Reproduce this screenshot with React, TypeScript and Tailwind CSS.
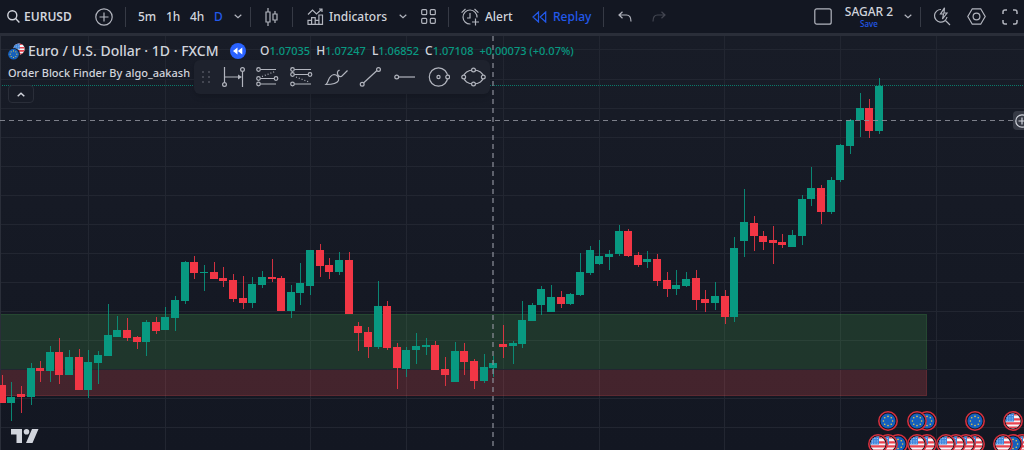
import type { ReactNode } from 'react';

type Candle = [dir: 'u' | 'd', high: number, top: number, bottom: number, low: number];

const CANDLE_START = 1.6;
const CANDLE_STEP = 9.64;
const UP = '#089981';
const DOWN = '#f23645';

const candles: Candle[] = [
  ['d', 375, 385, 403, 403], ['u', 382, 397, 403, 421], ['d', 386, 394, 397, 413], ['u', 363, 368, 397, 405],
  ['d', 361, 368, 371, 382], ['u', 346, 352, 371, 382], ['d', 338, 352, 375, 384], ['u', 350, 357, 375, 375],
  ['d', 349, 357, 390, 390], ['u', 350, 362, 390, 398], ['u', 351, 355, 363, 384], ['u', 304, 335, 356, 356],
  ['u', 316, 330, 337, 337], ['d', 318, 330, 338, 341], ['d', 336, 337, 342, 349], ['u', 320, 322, 342, 356],
  ['d', 317, 322, 331, 334], ['u', 307, 317, 330, 330], ['u', 296, 300, 318, 331], ['u', 261, 262, 301, 304],
  ['d', 256, 262, 273, 279], ['u', 265, 272, 273, 291], ['d', 262, 272, 279, 279], ['d', 267, 278, 281, 287],
  ['d', 274, 280, 299, 302], ['d', 276, 298, 303, 309], ['u', 277, 284, 303, 308], ['u', 271, 277, 285, 288],
  ['d', 259, 277, 279, 282], ['d', 276, 278, 311, 311], ['u', 285, 292, 311, 318], ['u', 263, 283, 293, 305],
  ['u', 250, 250, 286, 295], ['d', 244, 250, 266, 277], ['d', 258, 265, 272, 279], ['u', 252, 260, 272, 275],
  ['d', 252, 260, 314, 314], ['d', 322, 326, 333, 351], ['d', 327, 332, 347, 358], ['u', 281, 306, 347, 349],
  ['d', 301, 306, 348, 350], ['d', 343, 347, 368, 389], ['u', 347, 350, 369, 377], ['u', 333, 346, 350, 364],
  ['u', 338, 345, 347, 355], ['d', 341, 345, 370, 370], ['d', 357, 369, 375, 386], ['u', 342, 351, 382, 382],
  ['d', 343, 351, 362, 375], ['d', 359, 361, 381, 389], ['u', 354, 367, 381, 383], ['u', 356, 363, 368, 377],
  ['d', 325, 344, 347, 358], ['u', 341, 343, 346, 364], ['u', 301, 320, 344, 348], ['u', 303, 305, 321, 321],
  ['u', 286, 289, 305, 315], ['u', 285, 297, 312, 312], ['d', 291, 297, 304, 308], ['u', 293, 294, 304, 305],
  ['u', 253, 272, 295, 296], ['u', 246, 250, 273, 275], ['u', 240, 256, 264, 265], ['u', 250, 254, 257, 270],
  ['u', 225, 231, 254, 256], ['d', 229, 231, 256, 257], ['d', 252, 255, 265, 267], ['u', 251, 259, 262, 268],
  ['d', 254, 259, 281, 286], ['d', 272, 280, 289, 297], ['u', 270, 285, 289, 295], ['u', 272, 279, 286, 287],
  ['d', 270, 278, 300, 310], ['d', 290, 299, 303, 312], ['u', 282, 296, 303, 310], ['d', 290, 296, 317, 324],
  ['u', 237, 248, 317, 322], ['u', 189, 222, 241, 257], ['d', 216, 223, 236, 251], ['d', 231, 236, 242, 250],
  ['d', 226, 240, 243, 264], ['d', 234, 242, 245, 248], ['u', 230, 235, 247, 247], ['u', 195, 199, 236, 245],
  ['u', 167, 188, 199, 206], ['d', 185, 188, 212, 224], ['u', 177, 180, 212, 214], ['u', 144, 145, 180, 182],
  ['u', 119, 120, 146, 154], ['u', 93, 108, 120, 137], ['d', 99, 108, 131, 138], ['u', 78, 86, 131, 134],
];

const gridX = [88, 165, 310, 406, 503, 599, 724, 840, 936];
const gridY = [49, 79, 108, 137, 166, 195, 224, 253, 282, 311, 340, 369, 398, 427];

const events: { flag: 'us' | 'eu'; x: number; y: number }[] = [
  { flag: 'eu', x: 888, y: 421 },
  { flag: 'eu', x: 917, y: 421 },
  { flag: 'eu', x: 927, y: 421 },
  { flag: 'eu', x: 975, y: 421 },
  { flag: 'us', x: 1013, y: 421 },
  { flag: 'us', x: 878, y: 444 },
  { flag: 'us', x: 888, y: 444 },
  { flag: 'eu', x: 898, y: 444 },
  { flag: 'us', x: 917, y: 444 },
  { flag: 'us', x: 927, y: 444 },
  { flag: 'us', x: 946, y: 444 },
  { flag: 'us', x: 956, y: 444 },
  { flag: 'us', x: 966, y: 444 },
  { flag: 'us', x: 975, y: 444 },
  { flag: 'us', x: 1003, y: 444 },
  { flag: 'eu', x: 1013, y: 444 },
  { flag: 'us', x: 1022, y: 444 },
];

function Icon({ w, h, children }: { w: number; h: number; children: ReactNode }) {
  return (
    <svg
      width={w}
      height={h}
      viewBox={`0 0 ${w} ${h}`}
      fill="none"
      stroke="currentColor"
      strokeWidth="1.2"
      className="shrink-0"
      aria-hidden="true"
    >
      {children}
    </svg>
  );
}

function Chevron() {
  return (
    <Icon w={8} h={5}>
      <path d="M.7.8 4 3.8 7.3.8" />
    </Icon>
  );
}

function Divider() {
  return <div className="h-5 w-px shrink-0 bg-[#363a45]" />;
}

function Flag({ flag }: { flag: 'us' | 'eu' }) {
  if (flag === 'eu') {
    return (
      <g>
        <circle r="7.5" fill="#1560bd" />
        {Array.from({ length: 8 }, (_, i) => (
          <circle
            key={i}
            cx={4.6 * Math.cos((i * Math.PI) / 4)}
            cy={4.6 * Math.sin((i * Math.PI) / 4)}
            r="0.8"
            fill="#e5c94c"
          />
        ))}
      </g>
    );
  }
  return (
    <g clipPath="url(#flagClip)">
      <rect x="-8" y="-8" width="16" height="16" fill="#f5f5f8" />
      <path d="M-8-6.5H8M-8-1.7H8M-8 2.4H8M-8 6.6H8" stroke="#e8434f" strokeWidth="2.2" />
      <rect x="-8" y="-8" width="9" height="8.5" fill="#3f86dc" />
      <path d="M-6-5.5H1M-6-3H1M-6-.8H1" stroke="#b9d6f7" strokeWidth=".9" strokeDasharray="1 1.4" />
    </g>
  );
}

function Chart() {
  return (
    <svg className="absolute inset-0 h-full w-full" role="img" aria-label="EURUSD daily candles">
      <defs>
        <linearGradient id="chartBg" x1="0" y1="0" x2="0" y2="1">
          <stop offset="0" stopColor="#181c27" />
          <stop offset="1" stopColor="#131722" />
        </linearGradient>
        <clipPath id="flagClip">
          <circle r="7.5" />
        </clipPath>
      </defs>
      <rect width="100%" height="100%" fill="url(#chartBg)" />
      <g transform="translate(0 -36)">
        <g stroke="#222631" shapeRendering="crispEdges">
          {gridX.map((x) => (
            <line key={x} x1={x + 0.5} x2={x + 0.5} y1="36" y2="1200" />
          ))}
          {gridY.map((y) => (
            <line key={y} x1="0" x2="100%" y1={y + 0.5} y2={y + 0.5} />
          ))}
        </g>
        <line x1="0" x2="100%" y1="85.5" y2="85.5" stroke={UP} strokeOpacity="0.75" strokeDasharray="1 1" />

        <rect x="0" y="314" width="927" height="55" fill="#4caf50" fillOpacity="0.2" />
        <path d="M0 314.5H926.5V369" fill="none" stroke="#4caf50" strokeOpacity="0.15" />
        <rect x="0" y="370" width="927" height="26" fill="#f05350" fillOpacity="0.22" />
        <path d="M0 395.5H926.5V370" fill="none" stroke="#f05350" strokeOpacity="0.15" />
        <rect x="0" y="36" width="1" height="100%" fill="#2a2e39" />

        {candles.map(([dir, high, top, bottom, low], i) => {
          const x = Math.round(CANDLE_START + i * CANDLE_STEP);
          return (
            <g key={i} fill={dir === 'u' ? UP : DOWN}>
              <rect x={x} y={high} width="1" height={low - high} fillOpacity="0.85" />
              <rect x={x - 4} y={top} width="8" height={bottom - top} />
            </g>
          );
        })}

        <g stroke="#8f929c" strokeOpacity="0.85" strokeDasharray="5 4">
          <line x1="493" x2="493" y1="36" y2="1200" strokeWidth="1.4" />
          <line x1="0" x2="100%" y1="120.5" y2="120.5" />
        </g>

        {[...events].reverse().map((e) => (
          <g key={`${e.x}-${e.y}`} transform={`translate(${e.x} ${e.y})`}>
            <circle r="9.2" fill="#131722" stroke="#d9303e" strokeWidth="1.5" />
            <Flag flag={e.flag} />
          </g>
        ))}
      </g>
    </svg>
  );
}

function TopBar() {
  return (
    <header className="flex h-9 shrink-0 items-center border-b-3 border-[#2a2e39] bg-[#131722] pl-[7px] pr-1.5 text-xs font-medium">
      <button className="flex w-22 items-center gap-1 font-semibold">
        <Icon w={13} h={13}>
          <circle cx="5.3" cy="5.3" r="4.5" strokeWidth="1.4" />
          <path d="m8.6 8.6 3.8 3.8" strokeWidth="1.4" />
        </Icon>
        EURUSD
      </button>
      <button aria-label="Compare symbol" className="mr-3 text-[#b2b5be]">
        <Icon w={18} h={18}>
          <circle cx="9" cy="9" r="8.2" />
          <path d="M9 4.5v9M4.5 9h9" />
        </Icon>
      </button>
      <Divider />
      <nav className="ml-3 mr-2 flex items-center">
        <button className="w-7 text-left">5m</button>
        <button className="w-6 text-left">1h</button>
        <button className="w-6 text-left">4h</button>
        <button className="w-5 text-left text-[#2259eb]">D</button>
        <button aria-label="More intervals" className="text-[#b2b5be]">
          <Chevron />
        </button>
      </nav>
      <Divider />
      <button aria-label="Chart type" className="mx-3.5 text-[#b2b5be]">
        <Icon w={13} h={18}>
          <path d="M3 0v4M3 14v4M1 4h4v10H1zM10 3v3M10 12v3M8 6h4v6H8z" />
        </Icon>
      </button>
      <Divider />
      <button className="ml-3.5 flex w-[92px] items-center gap-[5px]">
        <Icon w={17} h={17}>
          <path
            d="M1 6.5 5.5 2l4 4L15 1M12 1h3v3M1 16.4v-4h3.6v4M4.6 12.4V9.6h3.6v6.8M8.2 12.4h3.7v4M11.9 12V7h3.6v9.4M.5 16.4h15.6"
            stroke="#b2b5be"
          />
        </Icon>
        Indicators
      </button>
      <button aria-label="Favorite indicators" className="mr-3.5 text-[#b2b5be]">
        <Chevron />
      </button>
      <button aria-label="Templates" className="mr-3 text-[#b2b5be]">
        <Icon w={15} h={15}>
          <rect x=".7" y=".7" width="5" height="5" rx="1" />
          <rect x="9.3" y=".7" width="5" height="5" rx="1" />
          <rect x=".7" y="9.3" width="5" height="5" rx="1" />
          <rect x="9.3" y="9.3" width="5" height="5" rx="1" />
        </Icon>
      </button>
      <Divider />
      <button className="ml-3 flex w-[71px] items-center gap-[5px]">
        <Icon w={19} h={18}>
          <path
            d="M16 9.5A7 7 0 1 0 9.5 16M9 5v5H6M.6 4.6 4.5 1M13.5 1l3.9 3.6M14.5 10.5v7M11 14h7"
            stroke="#b2b5be"
          />
        </Icon>
        Alert
      </button>
      <button className="flex w-[71px] items-center gap-1.5 text-[#2259eb]">
        <Icon w={15} h={12}>
          <path d="M6.5 1v10L1 6zM13.7 1v10L8.2 6z" />
        </Icon>
        Replay
      </button>
      <Divider />
      <button aria-label="Undo" className="ml-3.5 mr-5 text-[#b2b5be]">
        <Icon w={14} h={11}>
          <path d="M4.5.8 1 4l3.5 3.3M1 4h7.5C11.5 4 13 6 13 10.5" />
        </Icon>
      </button>
      <button aria-label="Redo" className="text-[#434651]">
        <Icon w={14} h={11}>
          <path d="M9.5.8 13 4 9.5 7.3M13 4H5.5C2.5 4 1 6 1 10.5" />
        </Icon>
      </button>

      <div className="ml-auto flex items-center">
        <button aria-label="Select layout" className="mr-3 text-[#b2b5be]">
          <Icon w={18} h={17}>
            <rect x=".8" y=".8" width="16.4" height="15.4" rx="2" />
          </Icon>
        </button>
        <button className="flex w-[60px] flex-col">
          <span className="w-[50px] whitespace-nowrap text-center leading-[15px]">SAGAR 2</span>
          <span className="w-[50px] text-center text-[8px] leading-[10px] text-[#2259eb]">Save</span>
        </button>
        <button aria-label="Manage layouts" className="mr-2 text-[#b2b5be]">
          <Chevron />
        </button>
        <Divider />
        <div className="ml-3 flex items-center gap-4 text-[#b2b5be]">
          <button aria-label="Quick search">
            <Icon w={18} h={19}>
              <path d="M8 2.5A6.3 6.3 0 1 0 14 10M12 13l5 5M11.5.8 7.5 7h3l-1 5L14 6h-3z" />
            </Icon>
          </button>
          <button aria-label="Settings">
            <Icon w={19} h={17}>
              <path d="M5.3.8h8.4l4.5 7.7-4.5 7.7H5.3L.8 8.5z" />
              <circle cx="9.5" cy="8.5" r="3.4" />
            </Icon>
          </button>
          <button aria-label="Fullscreen">
            <Icon w={16} h={16}>
              <path
                d="M1 5V3a2 2 0 0 1 2-2h2M11 1h2a2 2 0 0 1 2 2v2M15 11v2a2 2 0 0 1-2 2h-2M5 15H3a2 2 0 0 1-2-2v-2"
                strokeWidth="1.5"
              />
            </Icon>
          </button>
        </div>
      </div>
    </header>
  );
}

const ohlc = [
  { label: 'O', value: '1.07035' },
  { label: 'H', value: '1.07247' },
  { label: 'L', value: '1.06852' },
  { label: 'C', value: '1.07108' },
];

function Legend() {
  return (
    <div className="absolute left-2 top-1.5 text-[#d1d4dc]">
      <div className="flex h-[18px] items-center">
        <svg width="17" height="17" viewBox="0 0 17 17" className="mr-[3px] shrink-0" aria-hidden="true">
          <g transform="translate(11 6) scale(.75)">
            <Flag flag="us" />
          </g>
          <circle cx="6" cy="11" r="6" fill="#181c27" />
          <g transform="translate(5.5 11.2) scale(.72)">
            <Flag flag="eu" />
          </g>
        </svg>
        <h1 className="w-[202px] whitespace-nowrap text-sm font-medium">Euro / U.S. Dollar · 1D · FXCM</h1>
        <svg width="16" height="16" viewBox="0 0 16 16" className="mr-3.5 shrink-0" aria-hidden="true">
          <circle cx="8" cy="8" r="8" fill="#2962ff" />
          <path d="M7.5 4.5v7L3 8zM12.3 4.5v7L7.8 8z" fill="#fff" />
        </svg>
        <div className="flex items-baseline gap-1.5 whitespace-nowrap text-[11px] font-medium">
          {ohlc.map((item) => (
            <div key={item.label} className="flex items-baseline">
              <span className="text-xs">{item.label}</span>
              <span className="text-[#089981]">{item.value}</span>
            </div>
          ))}
          <span className="text-[#089981]">+0.00073 (+0.07%)</span>
        </div>
      </div>
      <p className="mt-1 whitespace-nowrap text-[11px] leading-[18px] font-medium">Order Block Finder By algo_aakash</p>
      <button
        aria-label="Collapse legend"
        className="mt-[3px] flex h-[18px] w-[26px] items-center justify-center rounded-sm border border-[#2a2e39] bg-[#181c27]"
      >
        <Icon w={8} h={5}>
          <path d="M.7 4.2 4 1.2l3.3 3" strokeWidth="1.5" />
        </Icon>
      </button>
    </div>
  );
}

function DrawingToolbar() {
  return (
    <div className="absolute left-[194px] top-6 flex h-[34px] items-center gap-3 rounded-md bg-[#1e222d] pl-2 pr-1 text-[#b2b5be] shadow-md">
      <svg width="8" height="12" viewBox="0 0 8 12" fill="#50535e" className="shrink-0" aria-hidden="true">
        {[1, 6, 11].map((y) => (
          <g key={y}>
            <circle cx="1" cy={y} r="1" />
            <circle cx="7" cy={y} r="1" />
          </g>
        ))}
      </svg>
      <div className="flex items-center gap-2.5">
        <button aria-label="Date range">
          <Icon w={24} h={20}>
            <path d="M2.5 0v15.5M20.5 5v15M3 10h15" />
            <circle cx="2.5" cy="17.5" r="1.9" />
            <circle cx="20.5" cy="2.5" r="1.9" />
            <path d="m16 7.5 4 2.5-4 2.5z" fill="currentColor" stroke="none" />
          </Icon>
        </button>
        <button aria-label="Long position">
          <Icon w={24} h={20}>
            <path d="M4.5 2.5H20M4.5 11.5H18M4.5 17H20" />
            <path d="m6 9.5 13-5" strokeDasharray="1 2" />
            <circle cx="2.5" cy="2.5" r="1.8" />
            <circle cx="2.5" cy="11.5" r="1.8" />
            <circle cx="20" cy="11.5" r="1.8" />
            <circle cx="2.5" cy="17" r="1.8" />
          </Icon>
        </button>
        <button aria-label="Short position">
          <Icon w={24} h={20}>
            <path d="M4.5 2.5H21M4.5 7.5H18M4.5 17H21" />
            <path d="m6 10 13 5" strokeDasharray="1 2" />
            <circle cx="2.5" cy="2.5" r="1.8" />
            <circle cx="2.5" cy="7.5" r="1.8" />
            <circle cx="20" cy="7.5" r="1.8" />
            <circle cx="2.5" cy="17" r="1.8" />
          </Icon>
        </button>
        <button aria-label="Brush">
          <Icon w={24} h={18}>
            <path d="M2 16.5C5 14 4 7.5 10 6.5c3 0 5.500 3 4.500 6-1.500 3-6.500 4-12.500 4zM13.500 3.500c-.5 3 1 5.500 4 5L23.500 2.500M13.500 3.500l2-1.500" />
          </Icon>
        </button>
        <button aria-label="Trend line">
          <Icon w={24} h={20}>
            <path d="M5.5 16 19 3.5" />
            <circle cx="4.2" cy="17.2" r="1.9" />
            <circle cx="20.5" cy="2.5" r="1.9" />
          </Icon>
        </button>
        <button aria-label="Horizontal ray">
          <Icon w={24} h={20}>
            <path d="M6.5 10H23" />
            <circle cx="4.7" cy="10" r="1.9" />
          </Icon>
        </button>
        <button aria-label="Circle">
          <Icon w={24} h={20}>
            <circle cx="12.5" cy="10" r="9.2" />
            <circle cx="12.5" cy="10" r="1.6" />
            <circle cx="21.7" cy="10" r="1.9" fill="#1e222d" />
          </Icon>
        </button>
        <button aria-label="Ellipse">
          <Icon w={26} h={20}>
            <ellipse cx="13.5" cy="10" rx="9.8" ry="7" />
            <circle cx="13.5" cy="3" r="1.9" fill="#1e222d" />
            <circle cx="13.5" cy="17" r="1.9" fill="#1e222d" />
            <circle cx="3.7" cy="10" r="1.9" fill="#1e222d" />
            <circle cx="23.3" cy="10" r="1.9" fill="#1e222d" />
          </Icon>
        </button>
      </div>
    </div>
  );
}

export default function App() {
  return (
    <div className="flex h-screen flex-col overflow-hidden bg-[#131722] font-['Noto_Sans',sans-serif] text-[#d1d4dc]">
      <TopBar />
      <main className="relative flex-1 overflow-hidden">
        <Chart />
        <Legend />
        <DrawingToolbar />
        <button
          aria-label="Add alert at price"
          className="absolute right-0 top-[75px] flex h-[19px] w-[11px] items-center overflow-hidden rounded-l-sm bg-[#363a45] pl-0.5"
        >
          <Icon w={14} h={14}>
            <circle cx="7" cy="7" r="6.2" />
            <path d="M7 3.5v7M3.5 7h7" />
          </Icon>
        </button>
        <svg
          width="28"
          height="14"
          viewBox="0 0 28 14"
          fill="#d1d4dc"
          className="absolute bottom-[7px] left-[11px]"
          role="img"
          aria-label="TradingView"
        >
          <path d="M0 0h11v14H5.5V5.5H0zM21 0h6.5l-6 14H15z" />
          <circle cx="15.5" cy="2.8" r="2.8" />
        </svg>
      </main>
    </div>
  );
}
